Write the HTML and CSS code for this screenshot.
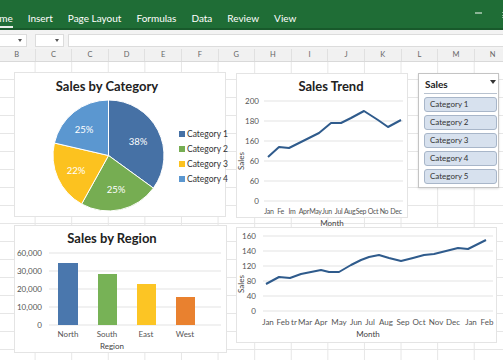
FILE: index.html
```html
<!DOCTYPE html>
<html lang="en">
<head>
    <meta charset="UTF-8">
    <meta name="viewport" content="width=device-width, initial-scale=1.0">
    <title>Sales Dashboard</title>
    <link rel="stylesheet" href="styles.css">
</head>
<body>
    <div class="app">
        <div class="ribbon">
            <div class="tabs">
                <span class="tab active">Home</span>
                <span class="tab">Insert</span>
                <span class="tab">Page Layout</span>
                <span class="tab">Formulas</span>
                <span class="tab">Data</span>
                <span class="tab">Review</span>
                <span class="tab">View</span>
            </div>
            <div class="ribbon-icons">
                <span class="rib-icon"></span>
                <span class="rib-icon menu"></span>
            </div>
        </div>

        <div class="formula-bar">
            <div class="box name-box"><span class="caret"></span></div>
            <div class="box small-box"><span class="caret"></span></div>
            <div class="box formula-input"></div>
        </div>

        <div class="col-headers">
            <div>B</div><div>C</div><div>C</div><div>D</div><div>E</div><div>F</div><div>G</div>
            <div>H</div><div>I</div><div>J</div><div>K</div><div>L</div><div>M</div><div>N</div>
        </div>

        <div class="sheet">
            <!-- pie chart -->
            <div class="chart pie-card">
                <svg width="212" height="145" viewBox="0 0 212 145">
                    <text class="title" x="92" y="18">Sales by Category</text>
                    <g stroke="#fff" stroke-width="1">
                        <path fill="#4671a5" d="M93.5,82.5 L93.5,27 A55.5,55.5 0 0 1 138.4,115.1 Z"/>
                        <path fill="#76ad52" d="M93.5,82.5 L138.4,115.1 A55.5,55.5 0 0 1 66.6,131 Z"/>
                        <path fill="#fcc21f" d="M93.5,82.5 L66.6,131 A55.5,55.5 0 0 1 39.4,70 Z"/>
                        <path fill="#5b97d0" d="M93.5,82.5 L39.4,70 A55.5,55.5 0 0 1 93.5,27 Z"/>
                    </g>
                    <g class="pct">
                        <text x="123" y="72">38%</text>
                        <text x="101" y="120">25%</text>
                        <text x="61" y="101">22%</text>
                        <text x="69" y="60">25%</text>
                    </g>
                    <g class="legend">
                        <rect x="164" y="58" width="6" height="6" fill="#4671a5"/>
                        <text x="172" y="64">Category 1</text>
                        <rect x="164" y="73" width="6" height="6" fill="#76ad52"/>
                        <text x="172" y="79">Category 2</text>
                        <rect x="164" y="88" width="6" height="6" fill="#fcc21f"/>
                        <text x="172" y="94">Category 3</text>
                        <rect x="164" y="103" width="6" height="6" fill="#5b97d0"/>
                        <text x="172" y="109">Category 4</text>
                    </g>
                </svg>
            </div>

            <!-- sales trend -->
            <div class="chart trend-card">
                <svg width="172" height="145" viewBox="0 0 172 145">
                    <text class="title" x="94" y="17">Sales Trend</text>
                    <g class="grid">
                        <line x1="27" y1="27" x2="166" y2="27"/>
                        <line x1="27" y1="47" x2="166" y2="47"/>
                        <line x1="27" y1="67" x2="166" y2="67"/>
                        <line x1="27" y1="87" x2="166" y2="87"/>
                        <line x1="27" y1="107" x2="166" y2="107"/>
                        <line x1="27" y1="127" x2="166" y2="127"/>
                    </g>
                    <g class="axis y-axis">
                        <text x="22" y="30">200</text>
                        <text x="22" y="50">180</text>
                        <text x="22" y="70">160</text>
                        <text x="22" y="90">60</text>
                        <text x="22" y="110">60</text>
                        <text x="22" y="130">0</text>
                    </g>
                    <text class="axis axis-title" transform="translate(7 87) rotate(-90)">Sales</text>
                    <g class="axis x-axis tight">
                        <text x="32" y="140">Jan</text>
                        <text x="43.6" y="140">Fe</text>
                        <text x="55" y="140">Im</text>
                        <text x="66.8" y="140">Apr</text>
                        <text x="78.4" y="140">May</text>
                        <text x="90" y="140">Jun</text>
                        <text x="101.6" y="140">Jul</text>
                        <text x="112.6" y="140">Aug</text>
                        <text x="124" y="140">Sep</text>
                        <text x="136" y="140">Oct</text>
                        <text x="147" y="140">No</text>
                        <text x="159" y="140">Dec</text>
                    </g>
                    <polyline class="line" points="31,83 42,73 52,74 64,68 74,63 82,59 94,49 104,49 114,44 127,37 141,46 151,53 164,46"/>
                    <text class="axis axis-title" x="95" y="152">Month</text>
                </svg>
            </div>

            <!-- slicer -->
            <div class="chart slicer">
                <div class="slicer-head">
                    <span>Sales</span>
                    <span class="slicer-caret"></span>
                </div>
                <div class="slicer-items">
                    <div class="slicer-item">Category 1</div>
                    <div class="slicer-item">Category 2</div>
                    <div class="slicer-item">Category 3</div>
                    <div class="slicer-item">Category 4</div>
                    <div class="slicer-item">Category 5</div>
                </div>
            </div>

            <!-- sales by region -->
            <div class="chart region-card">
                <svg width="213" height="128" viewBox="0 0 213 128">
                    <text class="title" x="97" y="17">Sales by Region</text>
                    <g class="grid">
                        <line x1="34" y1="27" x2="206" y2="27"/>
                        <line x1="34" y1="45" x2="206" y2="45"/>
                        <line x1="34" y1="63" x2="206" y2="63"/>
                        <line x1="34" y1="81" x2="206" y2="81"/>
                        <line x1="34" y1="99" x2="206" y2="99"/>
                    </g>
                    <g class="axis y-axis">
                        <text x="27" y="30">60,000</text>
                        <text x="27" y="48">30,000</text>
                        <text x="27" y="66">20,000</text>
                        <text x="27" y="84">10,000</text>
                        <text x="27" y="102">0</text>
                    </g>
                    <rect x="43" y="37" width="20" height="62" fill="#4a77ad"/>
                    <rect x="83" y="48" width="19" height="51" fill="#77b256"/>
                    <rect x="122" y="58" width="19" height="41" fill="#fcc524"/>
                    <rect x="161" y="71" width="19" height="28" fill="#e9812f"/>
                    <g class="axis x-axis">
                        <text x="53" y="111">North</text>
                        <text x="92" y="111">South</text>
                        <text x="131" y="111">East</text>
                        <text x="170" y="111">West</text>
                    </g>
                    <text class="axis axis-title" x="97" y="123">Region</text>
                </svg>
            </div>

            <!-- monthly trend -->
            <div class="chart month-card">
                <svg width="261" height="116" viewBox="0 0 261 116">
                    <g class="grid">
                        <line x1="26" y1="8" x2="256" y2="8"/>
                        <line x1="26" y1="23" x2="256" y2="23"/>
                        <line x1="26" y1="38" x2="256" y2="38"/>
                        <line x1="26" y1="53" x2="256" y2="53"/>
                        <line x1="26" y1="68" x2="256" y2="68"/>
                        <line x1="26" y1="83" x2="256" y2="83"/>
                    </g>
                    <g class="axis y-axis">
                        <text x="19" y="11">160</text>
                        <text x="19" y="26">140</text>
                        <text x="19" y="41">120</text>
                        <text x="19" y="56">80</text>
                        <text x="19" y="71">40</text>
                        <text x="19" y="86">0</text>
                    </g>
                    <text class="axis axis-title" transform="translate(7 56) rotate(-90)">Sales</text>
                    <g class="axis x-axis">
                        <text x="31" y="97">Jan</text>
                        <text x="46" y="97">Feb</text>
                        <text x="57" y="97">tr</text>
                        <text x="68" y="97">Mar</text>
                        <text x="84" y="97">Apr</text>
                        <text x="102" y="97">May</text>
                        <text x="119" y="97">Jun</text>
                        <text x="133" y="97">Jul</text>
                        <text x="149" y="97">Aug</text>
                        <text x="166" y="97">Sep</text>
                        <text x="182" y="97">Oct</text>
                        <text x="199" y="97">Nov</text>
                        <text x="216" y="97">Dec</text>
                        <text x="234" y="97">Jan</text>
                        <text x="250" y="97">Feb</text>
                    </g>
                    <polyline class="line" points="29,56 42,49 53,50 64,46 74,44 84,42 92,44 102,44 114,37 124,32 132,29 142,27 152,30 164,33 176,30 187,27 197,26 209,23 221,20 231,21 249,12"/>
                    <text class="axis axis-title" x="131" y="109">Month</text>
                </svg>
            </div>
        </div>
    </div>
</body>
</html>
```

FILE: styles.css
```css
body {
    margin: 0;
    font-family: "Lato", "Open Sans", sans-serif;
    background-color: #fff;
}

.app {
    width: 503px;
    height: 360px;
    overflow: hidden;
    display: flex;
    flex-direction: column;
}

/* ribbon */
.ribbon {
    height: 28px;
    flex: none;
    background-color: #1f6d36;
    border-bottom: 2px solid #18592b;
    display: flex;
    justify-content: space-between;
    align-items: flex-end;
}

.tabs {
    display: flex;
    gap: 15px;
    margin-left: -14px;
}

.tab {
    color: #fff;
    font-size: 10px;
    line-height: 12px;
    padding-bottom: 4px;
}

.tab.active {
    box-shadow: inset 0 -2px 0 #e8efe9;
}

.ribbon-icons {
    display: flex;
    gap: 20px;
    margin-right: -6px;
    padding-bottom: 10px;
}

.rib-icon {
    width: 7px;
    height: 2px;
    background-color: #b9d3bf;
    opacity: 0.7;
}

.rib-icon.menu {
    height: 6px;
    background: linear-gradient(#b9d3bf 0 1px, transparent 1px 3px, #b9d3bf 3px 4px, transparent 4px 5px, #b9d3bf 5px 6px);
}

/* formula bar */
.formula-bar {
    height: 19px;
    flex: none;
    background-color: #f3f3f3;
    display: flex;
    align-items: center;
    gap: 4px;
    padding-top: 2px;
    box-sizing: border-box;
}

.box {
    height: 13px;
    background-color: #fff;
    border: 1px solid #dcdcdc;
    box-sizing: border-box;
    position: relative;
}

.name-box {
    width: 32px;
    margin-left: -5px;
    margin-right: 4px;
}

.small-box {
    width: 29px;
}

.formula-input {
    flex: 1;
    margin-right: -4px;
}

.caret {
    position: absolute;
    right: 4px;
    top: 4px;
    border-left: 2px solid transparent;
    border-right: 2px solid transparent;
    border-top: 3px solid #555;
}

/* column headers */
.col-headers {
    height: 13px;
    flex: none;
    background-color: #f1f1f1;
    border-bottom: 1px solid #d9d9d9;
    display: grid;
    grid-template-columns: repeat(14, 36.6px);
    margin-left: -1px;
    box-sizing: border-box;
}

.col-headers div {
    font-size: 7.5px;
    color: #666;
    text-align: center;
    line-height: 12px;
    border-right: 1px solid #e0e0e0;
}

/* sheet grid */
.sheet {
    flex: 1;
    position: relative;
    background-color: #fff;
    background-image:
        linear-gradient(to right, #e6e6e6 1px, transparent 1px),
        linear-gradient(to bottom, #e6e6e6 1px, transparent 1px);
    background-size: 36.6px 18px;
    background-position: -2px 17px;
}

/* floating chart objects */
.chart {
    position: absolute;
    background-color: #fff;
    border: 1px solid #e4e4e4;
    box-sizing: border-box;
}

.chart svg {
    display: block;
    overflow: visible;
    font-family: "Lato", sans-serif;
}

.pie-card {
    left: 14px;
    top: 10px;
    width: 212px;
    height: 145px;
}

.trend-card {
    left: 236px;
    top: 11px;
    width: 172px;
    height: 145px;
}

.region-card {
    left: 14px;
    top: 163px;
    width: 213px;
    height: 128px;
}

.month-card {
    left: 236px;
    top: 165px;
    width: 261px;
    height: 116px;
}

.title {
    font-size: 13px;
    font-weight: 700;
    fill: #222;
    text-anchor: middle;
}

.pct text {
    font-size: 9.5px;
    fill: #fff;
    text-anchor: middle;
}

.legend text {
    font-size: 8.5px;
    fill: #333;
}

.grid line {
    stroke: #e3e3e3;
    stroke-width: 1;
}

.axis {
    font-size: 8px;
    fill: #555;
}

.y-axis text {
    text-anchor: end;
}

.x-axis text,
.axis-title {
    text-anchor: middle;
}

.x-axis.tight text {
    font-size: 7px;
    letter-spacing: -0.3px;
}

.axis-title {
    font-size: 8px;
    fill: #444;
}

.line {
    fill: none;
    stroke: #2f5b8c;
    stroke-width: 2;
    stroke-linejoin: round;
}

/* slicer */
.slicer {
    left: 418px;
    top: 11px;
    width: 81px;
    height: 115px;
    border-color: #c4c4c4;
    box-shadow: 0 1px 2px rgba(0, 0, 0, 0.12);
    padding: 0 1px 0 5px;
}

.slicer-head {
    height: 19px;
    display: flex;
    justify-content: space-between;
    align-items: center;
    border-bottom: 1px solid #b8c2cf;
    font-size: 10px;
    font-weight: 700;
    color: #222;
    padding: 0 1px;
}

.slicer-caret {
    border-left: 3px solid transparent;
    border-right: 3px solid transparent;
    border-top: 4px solid #333;
    margin-top: -3px;
}

.slicer-items {
    display: flex;
    flex-direction: column;
    gap: 3px;
    padding-top: 3px;
}

.slicer-item {
    height: 15px;
    background-color: #d7e1ee;
    border: 1px solid #a8b6c9;
    border-radius: 3px;
    box-sizing: border-box;
    font-size: 8px;
    line-height: 13px;
    color: #333;
    padding-left: 5px;
}
```
